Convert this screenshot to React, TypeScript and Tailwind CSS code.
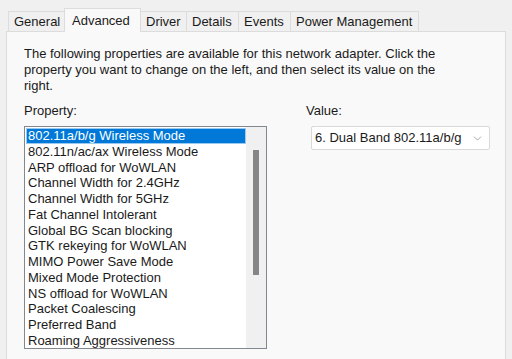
import { ChevronDown } from 'lucide-react';

const tabs = [
  { label: 'General', w: 'w-[57px]' },
  { label: 'Advanced', w: 'w-[77px]' },
  { label: 'Driver', w: 'w-[47px]' },
  { label: 'Details', w: 'w-[53px]' },
  { label: 'Events', w: 'w-[53px]' },
  { label: 'Power Management', w: 'w-[129px]' },
];

const properties = [
  '802.11a/b/g Wireless Mode',
  '802.11n/ac/ax Wireless Mode',
  'ARP offload for WoWLAN',
  'Channel Width for 2.4GHz',
  'Channel Width for 5GHz',
  'Fat Channel Intolerant',
  'Global BG Scan blocking',
  'GTK rekeying for WoWLAN',
  'MIMO Power Save Mode',
  'Mixed Mode Protection',
  'NS offload for WoWLAN',
  'Packet Coalescing',
  'Preferred Band',
  'Roaming Aggressiveness',
];

export default function App() {
  return (
    <div className="w-[512px] h-[359px] overflow-hidden bg-[#f0f0f0] text-[13px] text-[#1a1a1a] font-['Liberation_Sans',sans-serif]">
      {/* Tab strip */}
      <div className="flex items-end pl-[8px] pt-[7px] h-[31px] relative z-10">
        {tabs.map((t) =>
          t.label === 'Advanced' ? (
            <div
              key={t.label}
              className={`${t.w} h-[24px] pl-[7px] flex items-center bg-[#f9f9f9] border border-b-0 border-[#dcdcdc] -ml-px -mb-px`}
            >
              {t.label}
            </div>
          ) : (
            <div
              key={t.label}
              className={`${t.w} h-[20px] pl-[5px] flex items-center bg-[#f0f0f0] border border-b-0 border-[#dcdcdc] -ml-px first:ml-0`}
            >
              {t.label}
            </div>
          )
        )}
      </div>

      {/* Page */}
      <div className="ml-[6px] w-[500px] h-[340px] bg-[#f9f9f9] border border-[#dcdcdc] pl-[17px] pt-[14px]">
        <p className="w-[420px] leading-[16px]">
          The following properties are available for this network adapter. Click the property you want to
          change on the left, and then select its value on the right.
        </p>

        <div className="flex mt-[9px]">
          <div className="w-[243px]">
            <div className="leading-[16px]">Property:</div>
            <div className="mt-[7px] h-[223px] border border-[#828790] bg-white flex">
              <ul className="flex-1 pt-[1px] pl-[1px]">
                {properties.map((p, i) => (
                  <li
                    key={p}
                    className={
                      i === 0
                        ? 'h-[15.75px] leading-[15.75px] pl-[2px] bg-[#0078d7] text-white outline outline-1 outline-[#99c9ef] -outline-offset-1'
                        : 'h-[15.75px] leading-[15.75px] pl-[2px]'
                    }
                  >
                    {p}
                  </li>
                ))}
              </ul>
              <div className="w-[20px] bg-[#f0f0f0] flex justify-center pt-[23px]">
                <div className="w-[6px] h-[125px] bg-[#858585]" />
              </div>
            </div>
          </div>

          <div className="ml-[39px]">
            <div className="leading-[16px]">Value:</div>
            <div className="mt-[7px] ml-[5px] w-[179px] h-[24px] border border-[#d9d9d9] rounded-[2px] bg-white flex items-center justify-between pl-[3px] pr-[5px]">
              <span>6. Dual Band 802.11a/b/g</span>
              <ChevronDown size={13} strokeWidth={1.2} className="text-[#7a7a7a]" />
            </div>
          </div>
        </div>
      </div>
    </div>
  );
}
